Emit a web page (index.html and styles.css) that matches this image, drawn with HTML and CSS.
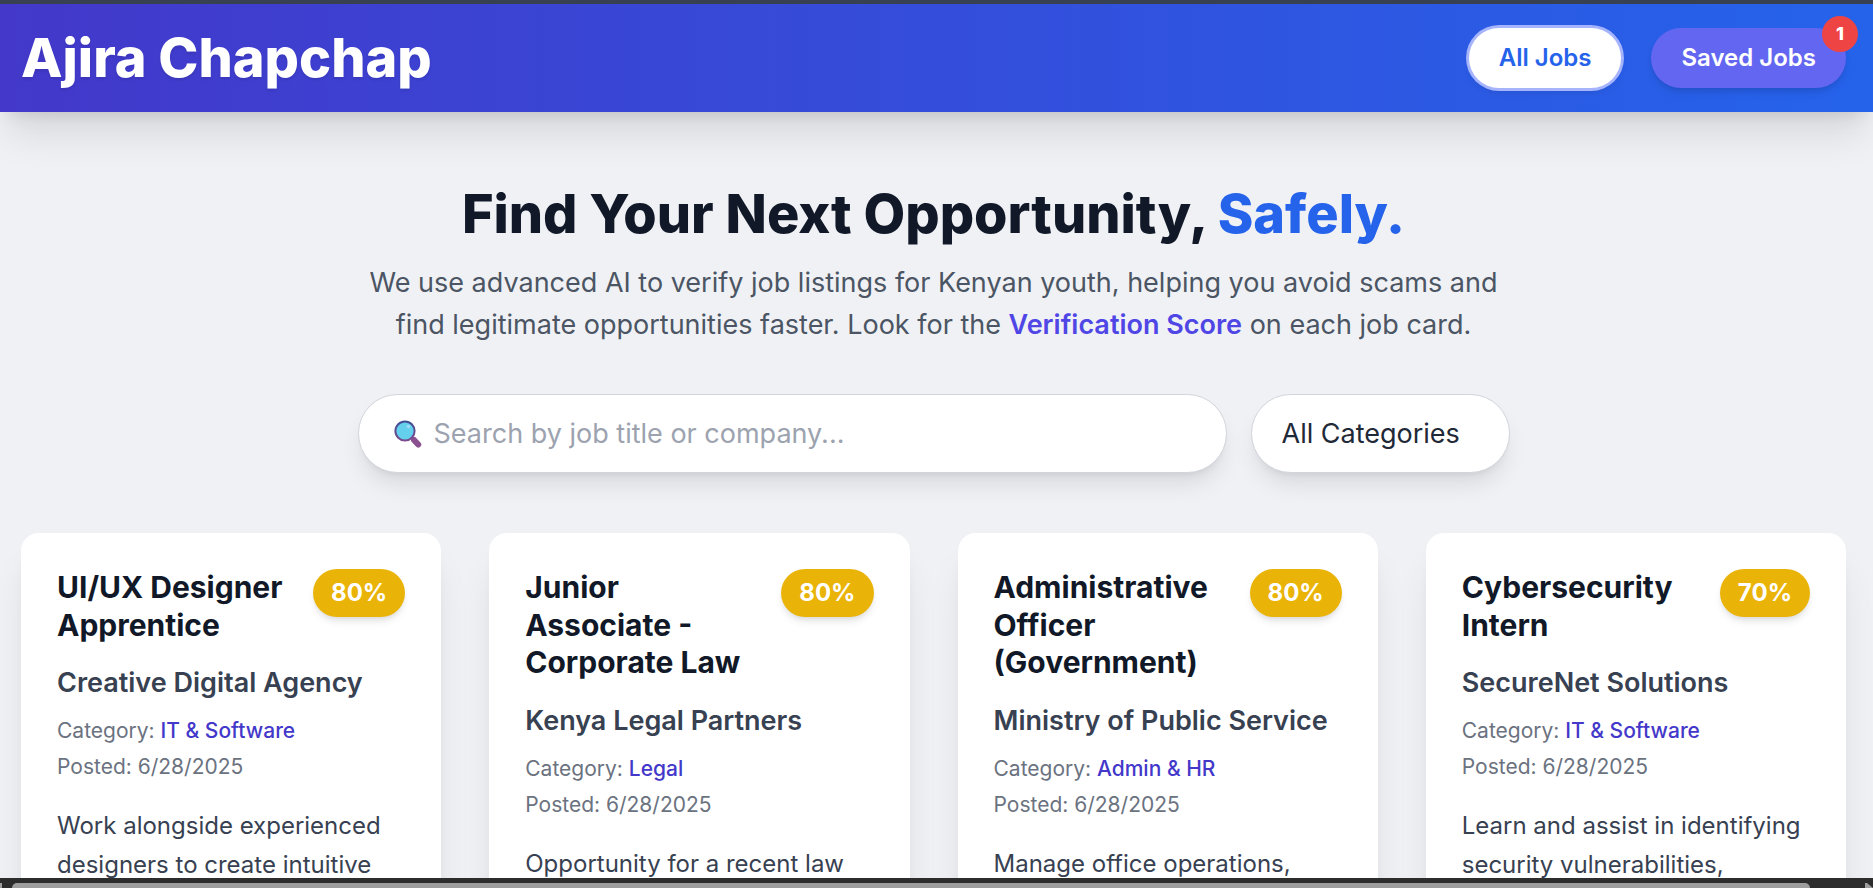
FILE: index.html
```html
<!DOCTYPE html>
<html lang="en">
<head>
    <meta charset="UTF-8">
    <meta name="viewport" content="width=device-width, initial-scale=1.0">
    <title>Ajira Chapchap</title>
    <link rel="stylesheet" href="styles.css">
</head>
<body>
    <header class="header">
        <h1 class="brand">Ajira Chapchap</h1>
        <nav class="nav">
            <button class="nav-button active">All Jobs</button>
            <button class="nav-button">Saved Jobs <span class="count">1</span></button>
        </nav>
    </header>

    <main class="main">
        <section class="hero">
            <h2>Find Your Next Opportunity, <span>Safely.</span></h2>
            <p>We use advanced AI to verify job listings for Kenyan youth, helping you avoid scams and find legitimate opportunities faster. Look for the <strong>Verification Score</strong> on each job card.</p>
        </section>

        <form class="filters">
            <div class="search">
                <svg class="search-icon" viewBox="0 0 28 28" aria-hidden="true">
                    <defs>
                        <linearGradient id="ring" x1="0" y1="0" x2="0" y2="1">
                            <stop offset="0" stop-color="#3f4f96"/>
                            <stop offset="1" stop-color="#7a4a8c"/>
                        </linearGradient>
                    </defs>
                    <path d="M17 17L20 20" stroke="#6a3f7c" stroke-width="3"/>
                    <path d="M20 20L24.2 24.6" stroke="#8a5090" stroke-width="6" stroke-linecap="round"/>
                    <circle cx="11" cy="11" r="9.6" fill="#65d0ed" stroke="url(#ring)" stroke-width="2"/>
                    <circle cx="14.5" cy="6.5" r="1.8" fill="#9fdcf5"/>
                </svg>
                <input type="text" id="searchInput" aria-label="Search jobs" placeholder="Search by job title or company...">
            </div>
            <select id="categorySelect" class="category" aria-label="Category">
                <option>All Categories</option>
            </select>
        </form>

        <section class="jobs">
            <article class="card">
                <div class="card-top">
                    <h3>UI/UX Designer Apprentice</h3>
                    <span class="score">80%</span>
                </div>
                <p class="company">Creative Digital Agency</p>
                <p class="meta">Category: <span>IT &amp; Software</span></p>
                <p class="meta">Posted: 6/28/2025</p>
                <p class="description">Work alongside experienced designers to create intuitive</p>
            </article>
            <article class="card">
                <div class="card-top">
                    <h3>Junior Associate - Corporate Law</h3>
                    <span class="score">80%</span>
                </div>
                <p class="company">Kenya Legal Partners</p>
                <p class="meta">Category: <span>Legal</span></p>
                <p class="meta">Posted: 6/28/2025</p>
                <p class="description">Opportunity for a recent law</p>
            </article>
            <article class="card">
                <div class="card-top">
                    <h3>Administrative Officer (Government)</h3>
                    <span class="score">80%</span>
                </div>
                <p class="company">Ministry of Public Service</p>
                <p class="meta">Category: <span>Admin &amp; HR</span></p>
                <p class="meta">Posted: 6/28/2025</p>
                <p class="description">Manage office operations,</p>
            </article>
            <article class="card">
                <div class="card-top">
                    <h3>Cybersecurity Intern</h3>
                    <span class="score">70%</span>
                </div>
                <p class="company">SecureNet Solutions</p>
                <p class="meta">Category: <span>IT &amp; Software</span></p>
                <p class="meta">Posted: 6/28/2025</p>
                <p class="description">Learn and assist in identifying security vulnerabilities,</p>
            </article>
        </section>
    </main>

    <div class="scrollbar">
        <div class="scroll-edge"></div>
        <div class="scroll-thumb"></div>
        <svg class="scroll-arrow" viewBox="0 0 8 5" aria-hidden="true"><path d="M0 0H2L8 5H0Z" fill="#9e9e9e"/></svg>
    </div>
</body>
</html>
```
FILE: styles.css
```css
* {
    box-sizing: border-box;
    margin: 0;
    padding: 0;
}

body {
    font-family: Inter, sans-serif;
    font-size: 24px;
    color: #1f2937;
    background-color: #f0f1f5;
    border-top: 4px solid #374151;
    height: 100vh;
    display: flex;
    flex-direction: column;
    overflow: hidden;
}

button, input, select {
    font-family: inherit;
}

.header {
    display: flex;
    justify-content: space-between;
    align-items: center;
    padding: 24px 27px 24px 21px;
    background: linear-gradient(to right, #4338ca, #2563eb);
    box-shadow: 0 30px 38px -8px rgba(0, 0, 0, 0.1), 0 12px 15px -9px rgba(0, 0, 0, 0.1);
    position: relative;
}

.brand {
    color: #ffffff;
    font-size: 54px;
    font-weight: 800;
    line-height: 60px;
    text-shadow: 0 2px 3px rgba(0, 0, 0, 0.1);
}

.nav {
    display: flex;
    gap: 30px;
}

.nav-button {
    position: relative;
    padding: 12px 30px;
    border: none;
    border-radius: 30px;
    background-color: #6366f1;
    color: #ffffff;
    font-size: 24px;
    font-weight: 600;
    line-height: 36px;
    box-shadow: 0 6px 9px -2px rgba(0, 0, 0, 0.1), 0 3px 6px -3px rgba(0, 0, 0, 0.1);
    cursor: pointer;
}

.nav-button.active {
    background-color: #ffffff;
    color: #2563eb;
    box-shadow: 0 0 0 3px #a5b4fc, 0 6px 9px -2px rgba(0, 0, 0, 0.1);
}

.count {
    position: absolute;
    top: -12px;
    right: -12px;
    width: 36px;
    height: 36px;
    border-radius: 50%;
    background-color: #ef4444;
    font-size: 18px;
    font-weight: 800;
    text-align: center;
}

.main {
    flex: 1;
    min-height: 0;
    overflow: hidden;
    padding: 72px 27px 0 21px;
}

.hero {
    max-width: 1152px;
    margin: 0 auto 48px;
    text-align: center;
}

.hero h2 {
    color: #111827;
    font-size: 54px;
    font-weight: 800;
    line-height: 60px;
    margin-bottom: 18px;
}

.hero h2 span {
    color: #2563eb;
}

.hero p {
    color: #4b5563;
    font-size: 27px;
    line-height: 42px;
}

.hero strong {
    color: #4f46e5;
    font-weight: 600;
}

.filters {
    display: flex;
    gap: 24px;
    max-width: 1152px;
    margin: 0 auto 60px;
}

.search, .category {
    height: 79px;
    background-color: #ffffff;
    border: 1px solid #d1d5db;
    border-radius: 40px;
    box-shadow: 0 15px 23px -5px rgba(0, 0, 0, 0.1), 0 6px 9px -6px rgba(0, 0, 0, 0.1);
}

.search {
    flex: 1;
    display: flex;
    align-items: center;
    gap: 12px;
    padding: 0 35px;
}

.search-icon {
    width: 28px;
    height: 28px;
}

.search input {
    flex: 1;
    min-width: 0;
    border: none;
    outline: none;
    background: none;
    font-size: 27px;
    line-height: 42px;
}

.search input::placeholder {
    color: #9ca3af;
}

.category {
    appearance: none;
    padding: 0 48px 0 30px;
    color: #1f2937;
    font-size: 27px;
}

.jobs {
    display: grid;
    grid-template-columns: repeat(4, 1fr);
    gap: 48px;
}

.card {
    background-color: #ffffff;
    border-radius: 18px;
    padding: 36px;
    box-shadow: 0 30px 38px -8px rgba(0, 0, 0, 0.1), 0 12px 15px -9px rgba(0, 0, 0, 0.1);
}

.card-top {
    display: flex;
    justify-content: space-between;
    align-items: flex-start;
    gap: 24px;
    margin-bottom: 18px;
}

.card h3 {
    color: #111827;
    font-size: 30px;
    font-weight: 700;
    line-height: 1.25;
}

.score {
    padding: 6px 18px;
    border-radius: 24px;
    background-color: #eab308;
    color: #ffffff;
    font-weight: 700;
    line-height: 36px;
    box-shadow: 0 6px 9px -2px rgba(0, 0, 0, 0.1), 0 3px 6px -3px rgba(0, 0, 0, 0.1);
}

.company {
    color: #374151;
    font-size: 27px;
    font-weight: 600;
    line-height: 42px;
    margin-bottom: 12px;
}

.meta {
    color: #6b7280;
    font-size: 21px;
    line-height: 30px;
    margin-bottom: 6px;
}

.meta span {
    color: #4338ca;
    font-weight: 500;
}

.description {
    color: #374151;
    line-height: 39px;
    margin-top: 24px;
}

.scrollbar {
    display: flex;
    justify-content: space-between;
    gap: 10px;
    height: 10px;
    padding-top: 5px;
    background-color: #2d2d2d;
}

.scroll-edge {
    width: 2px;
    background-color: #9e9e9e;
}

.scroll-thumb {
    flex: 1;
    margin-right: 45px;
    border-radius: 5px 5px 0 0;
    background-color: #9e9e9e;
}

.scroll-arrow {
    width: 8px;
    height: 5px;
}
```
